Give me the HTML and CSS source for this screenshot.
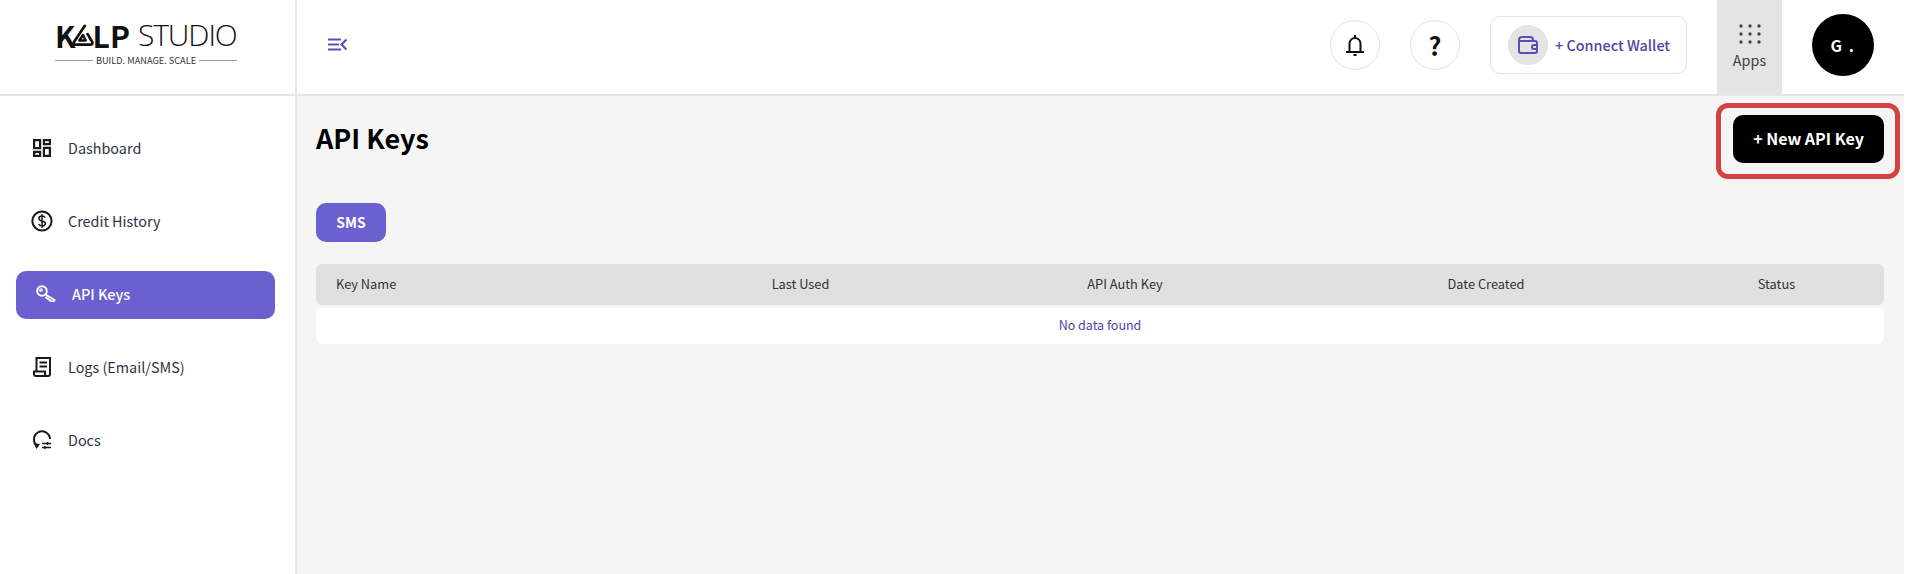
FILE: index.html
```html
<!DOCTYPE html>
<html lang="en">

<head>
    <meta charset="utf-8" />
    <title>API Keys</title>
    <link rel="stylesheet" href="styles.css">
</head>

<body>
    <header class="topbar">
        <div class="logo">
            <div class="logo-name">
                <b>K</b>
                <svg class="logo-mark" viewBox="0 0 24 24" width="22" height="22" fill="none" stroke="#111" stroke-width="3" stroke-linejoin="round" stroke-linecap="round">
                    <path d="M14 2 2 20q-1 2.500 2 2.500h16q3 0 2-3L17 11" />
                    <path d="M8 18l4-6 3 6z" stroke-width="2.600" />
                </svg>
                <b>LP</b>
                <span>STUDIO</span>
            </div>
            <div class="logo-tag">BUILD. MANAGE. SCALE</div>
        </div>

        <div class="topbar-main">
            <button type="button" class="menu-toggle" aria-label="Toggle menu">
                <svg viewBox="0 0 19 13" width="19" height="13" fill="none" stroke="#5a4fb5" stroke-width="2.200">
                    <path d="M0 1.500h13M0 6.500h11M0 11.500h13M18.500 1.500l-5 5 5 5" />
                </svg>
            </button>

            <div class="topbar-actions">
                <button type="button" class="round-btn" aria-label="Notifications">
                    <svg viewBox="0 0 18 21" width="18" height="21" fill="none" stroke="#111" stroke-width="2">
                        <path d="M3.500 16V8.500a5.500 5.500 0 0 1 11 0V16M0 17h18" />
                        <path d="M9 0v3M7.500 20h3" />
                    </svg>
                </button>
                <button type="button" class="round-btn help">?</button>
                <button type="button" class="wallet">
                    <span class="wallet-icon">
                        <svg viewBox="0 0 20 18" width="20" height="18" fill="none" stroke="#5a4fb5" stroke-width="2">
                            <path d="M1 4v11a2 2 0 0 0 2 2h14a2 2 0 0 0 2-2V7a2 2 0 0 0-2-2H1.500" />
                            <path d="M1 4a3 3 0 0 1 3-3h8a3 3 0 0 1 3 3" />
                            <path d="M19 9h-3a2 2 0 0 0 0 4h3" />
                        </svg>
                    </span>
                    <span class="wallet-label">+ Connect Wallet</span>
                </button>
                <div class="apps">
                    <svg viewBox="0 0 22 20" width="22" height="20" fill="#444">
                        <circle cx="2" cy="2" r="1.700" /><circle cx="11" cy="2" r="1.700" /><circle cx="20" cy="2" r="1.700" />
                        <circle cx="2" cy="10" r="1.700" /><circle cx="11" cy="10" r="1.700" /><circle cx="20" cy="10" r="1.700" />
                        <circle cx="2" cy="18" r="1.700" /><circle cx="11" cy="18" r="1.700" /><circle cx="20" cy="18" r="1.700" />
                    </svg>
                    <span>Apps</span>
                </div>
                <div class="avatar">G .</div>
            </div>
        </div>
    </header>

    <div class="layout">
        <nav class="sidebar">
            <a class="nav-item">
                <svg viewBox="0 0 18 18" width="18" height="18" fill="none" stroke="#1a1a1a" stroke-width="2.200">
                    <path d="M1.100 1.100h6v8h-6zM10.900 1.100h6v4h-6zM10.900 8.900h6v8h-6zM1.100 12.900h6v4h-6z" />
                </svg>
                Dashboard
            </a>
            <a class="nav-item">
                <svg viewBox="0 0 22 22" width="22" height="22" fill="none" stroke="#1a1a1a">
                    <circle cx="11" cy="11" r="9.600" stroke-width="2" />
                    <path d="M14.200 7.600c-.6-1-1.700-1.500-3.200-1.500-1.900 0-3.100 1-3.100 2.400 0 3.300 6.400 1.700 6.400 5 0 1.400-1.300 2.400-3.300 2.400-1.500 0-2.700-.6-3.300-1.700M11 4.300v13.400" stroke-width="1.500" />
                </svg>
                Credit History
            </a>
            <a class="nav-item active">
                <svg viewBox="0 0 20 17" width="20" height="17" fill="none" stroke="#fff" stroke-width="2">
                    <circle cx="6" cy="6" r="4.800" />
                    <circle cx="5" cy="5" r="1.200" stroke-width="1.300" />
                    <path d="M9.500 9.500l9 5.500-1 1.500h-2L9.500 12" stroke-linejoin="round" />
                </svg>
                API Keys
            </a>
            <a class="nav-item">
                <svg viewBox="0 0 18 20" width="18" height="20" fill="none" stroke="#1a1a1a" stroke-width="2">
                    <path d="M3.500 14V1h13.500v16a2 2 0 0 1-2 2H3a2 2 0 0 1-2-2v-2.500h11V17a2 2 0 0 0 2 2" />
                    <path d="M6.500 5.500h7.500M6.500 9.500h7.500" />
                </svg>
                Logs (Email/SMS)
            </a>
            <a class="nav-item">
                <svg viewBox="0 0 18 20" width="18" height="20" fill="none" stroke="#1a1a1a" stroke-width="2">
                    <path d="M4.500 16A8 8 0 1 1 17 9" />
                    <path d="M0.500 13l6.500 1-3.500 5z" fill="#1a1a1a" stroke="none" />
                    <path d="M9 13.500h9M9 17.500h9" stroke-width="1.500" />
                    <path d="M14.500 12v3M12 16v3" stroke-width="1.500" />
                </svg>
                Docs
            </a>
        </nav>

        <main class="content">
            <div class="page-head">
                <h1>API Keys</h1>
                <div class="highlight">
                    <button type="button" class="new-key">+ New API Key</button>
                </div>
            </div>

            <button type="button" class="tab">SMS</button>

            <table class="keys">
                <colgroup>
                    <col class="col-name">
                    <col class="col-used">
                    <col class="col-auth">
                    <col class="col-date">
                    <col class="col-status">
                </colgroup>
                <thead>
                    <tr>
                        <th>Key Name</th>
                        <th>Last Used</th>
                        <th>API Auth Key</th>
                        <th>Date Created</th>
                        <th>Status</th>
                    </tr>
                </thead>
                <tbody>
                    <tr>
                        <td colspan="5">No data found</td>
                    </tr>
                </tbody>
            </table>
        </main>
    </div>
</body>

</html>
```

FILE: styles.css
```css
* {
    box-sizing: border-box;
    font-family: "Noto Sans CJK JP", "Noto Sans", sans-serif;
}

body {
    margin: 0;
    height: 574px;
    padding-right: 2px;
    overflow: hidden;
    background: #fff;
}

button {
    cursor: pointer;
    padding: 0;
    border: 0;
    background: none;
}

.topbar {
    display: flex;
    height: 96px;
    border-bottom: 2px solid #e6e6e6;
}

.logo {
    width: 297px;
    flex-shrink: 0;
    border-right: 2px solid #e6e6e6;
    padding: 21px 0 0 55px;
}

.logo-name {
    display: flex;
    align-items: center;
    width: 182px;
    height: 28px;
    line-height: 28px;
    color: #111;
}

.logo-name b {
    font-weight: 700;
    font-size: 30px;
}

.logo-name span {
    margin-left: 8px;
    font-weight: 300;
    font-family: "Open Sans", sans-serif;
    font-size: 30px;
    letter-spacing: -1.1px;
}

.logo-mark {
    flex-shrink: 0;
    margin: 0 -1px 0 -4px;
}

.logo-tag {
    display: flex;
    align-items: center;
    gap: 3px;
    width: 182px;
    margin-top: 4px;
    font-size: 9.2px;
    line-height: 14px;
    color: #333;
    white-space: nowrap;
}

.logo-tag::before,
.logo-tag::after {
    content: "";
    flex: 1;
    height: 1px;
    background: #999;
}

.topbar-main {
    flex: 1;
    display: flex;
    align-items: center;
    justify-content: space-between;
    padding: 0 30px 0 31px;
}

.menu-toggle {
    display: flex;
    margin-bottom: 6px;
}

.topbar-actions {
    display: flex;
    align-items: center;
    height: 94px;
    padding-bottom: 4px;
}

.round-btn {
    display: flex;
    align-items: center;
    justify-content: center;
    width: 50px;
    height: 50px;
    margin-right: 30px;
    border: 1px solid #e4e4e4;
    border-radius: 50%;
    background: #fff;
}

.help {
    font-size: 25px;
    font-weight: 700;
    color: #111;
}

.wallet {
    display: flex;
    align-items: center;
    gap: 7px;
    width: 197px;
    height: 58px;
    margin-right: 30px;
    padding-left: 17px;
    border: 1px solid #e4e4e4;
    border-radius: 10px;
    font-size: 14.4px;
    font-weight: 500;
    color: #4f44a8;
    background: #fff;
}

.wallet-label {
    margin-bottom: 2px;
}

.wallet-icon {
    display: flex;
    align-items: center;
    justify-content: center;
    width: 40px;
    height: 40px;
    border-radius: 50%;
    background: #e4e4e4;
}

.apps {
    align-self: flex-start;
    display: flex;
    flex-direction: column;
    align-items: center;
    justify-content: center;
    gap: 6px;
    width: 65px;
    height: 94px;
    margin-right: 30px;
    font-size: 14.4px;
    line-height: 20px;
    color: #444;
    background: #e4e4e4;
}

.avatar {
    display: flex;
    align-items: center;
    justify-content: center;
    width: 62px;
    height: 62px;
    border-radius: 50%;
    font-size: 16px;
    font-weight: 700;
    letter-spacing: 1.5px;
    color: #fff;
    background: #000;
}

.layout {
    display: flex;
    height: 478px;
}

.sidebar {
    width: 297px;
    flex-shrink: 0;
    padding-top: 29px;
    border-right: 2px solid #e6e6e6;
}

.nav-item {
    display: flex;
    align-items: center;
    width: 259px;
    height: 48px;
    margin: 0 0 25px 16px;
    padding-left: 15px;
    padding-bottom: 3px;
    border-radius: 10px;
    font-size: 14.4px;
    color: #2b3445;
}

.nav-item svg {
    width: 22px;
    margin-right: 15px;
}

.nav-item.active {
    padding-left: 19px;
    font-weight: 500;
    color: #fff;
    background: #6a60d0;
}

.content {
    flex: 1;
    padding: 7px 20px 0 19px;
    background: #f5f5f5;
}

.page-head {
    display: flex;
    align-items: center;
    justify-content: space-between;
    height: 76px;
    margin-bottom: 24px;
}

.page-head h1 {
    margin: 0 0 8px;
    font-size: 27px;
    font-weight: 700;
    color: #000;
}

.highlight {
    margin-right: -16px;
    padding: 7px 11px 11px 12px;
    border: 5px solid #d24343;
    border-radius: 12px;
}

.new-key {
    display: block;
    width: 151px;
    height: 48px;
    padding-bottom: 2px;
    border-radius: 10px;
    font-size: 16px;
    font-weight: 700;
    color: #fff;
    background: #000;
}

.tab {
    display: block;
    width: 70px;
    height: 39px;
    padding-bottom: 2px;
    border-radius: 10px;
    font-size: 14px;
    font-weight: 700;
    color: #fff;
    background: #6a60d0;
}

.keys {
    width: 1568px;
    margin-top: 20px;
    table-layout: fixed;
    border-collapse: separate;
    border-spacing: 0 2px;
}

.col-name { width: 338px; }
.col-used { width: 293px; }
.col-auth { width: 356px; }
.col-date { width: 366px; }
.col-status { width: 215px; }

.keys th {
    height: 41px;
    padding-bottom: 4px;
    font-size: 12.8px;
    font-weight: 400;
    color: #333;
    background: #e0e0e0;
}

.keys th:first-child {
    padding-left: 20px;
    text-align: left;
    border-radius: 6px 0 0 6px;
}

.keys th:last-child {
    border-radius: 0 6px 6px 0;
}

.keys td {
    height: 37px;
    padding-bottom: 4px;
    font-size: 12.5px;
    text-align: center;
    color: #4f44a8;
    background: #fff;
    border-radius: 6px;
}
```
